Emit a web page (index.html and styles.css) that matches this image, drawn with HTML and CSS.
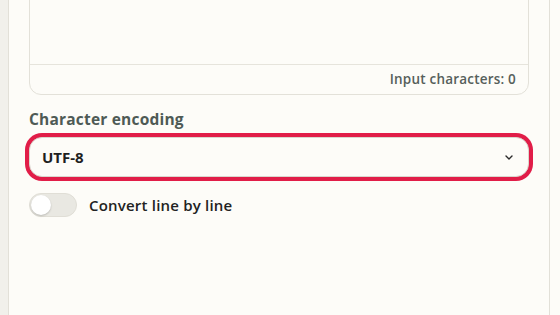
FILE: index.html
```html
<!DOCTYPE html>
<html lang="en">
<head>
  <meta charset="UTF-8" />
  <meta name="viewport" content="width=device-width, initial-scale=1.0" />
  <title>Character Converter</title>
  <link rel="stylesheet" href="styles.css">
</head>

<body>
  <aside class="side"></aside>

  <main class="panel">
    <div class="input-box">
      <textarea></textarea>
      <div class="input-footer">Input characters: <span id="count">0</span></div>
    </div>

    <label class="field-label" for="encoding">Character encoding</label>
    <div class="select-wrap">
      <select id="encoding">
        <option>UTF-8</option>
        <option>Shift_JIS</option>
        <option>EUC-JP</option>
      </select>
      <svg class="chevron" width="8" height="5" viewBox="0 0 8 5">
        <path d="M1 1l3 3 3-3" fill="none" stroke="#2b2b2b" stroke-width="1.4" stroke-linecap="round" stroke-linejoin="round"/>
      </svg>
    </div>

    <label class="toggle-row">
      <input type="checkbox" class="toggle-input" />
      <span class="toggle"><span class="knob"></span></span>
      <span class="toggle-text">Convert line by line</span>
    </label>
  </main>
</body>
</html>
```

FILE: styles.css
```css
body {
  margin: 0;
  font-family: "Open Sans", "Liberation Sans", Arial, sans-serif;
  display: flex;
  height: 100vh;
  overflow: hidden;
  background: #fdfcf8;
}

.side {
  width: 8px;
  background: #f1f0eb;
  border-right: 1px solid #e2e0d8;
}

.panel {
  width: 500px;
  padding: 0 20px;
  border-right: 1px solid #e2e0d8;
  display: flex;
  flex-direction: column;
}

.input-box {
  margin-top: -60px;
  border: 1px solid #e3e1d9;
  border-radius: 12px;
  overflow: hidden;
}

textarea {
  display: block;
  width: 100%;
  height: 124px;
  box-sizing: border-box;
  border: none;
  border-bottom: 1px solid #e6e4dc;
  background: transparent;
  resize: none;
  outline: none;
}

.input-footer {
  height: 29px;
  line-height: 29px;
  text-align: right;
  padding-right: 12px;
  font-size: 13.5px;
  font-weight: 600;
  letter-spacing: 0.2px;
  color: #56605b;
}

.field-label {
  margin-top: 13px;
  font-size: 15.5px;
  font-weight: 700;
  letter-spacing: 0.2px;
  line-height: 22px;
  color: #4e5a55;
}

.select-wrap {
  position: relative;
  margin-top: 7px;
}

select {
  appearance: none;
  width: 100%;
  height: 40px;
  box-sizing: border-box;
  padding: 0 12px;
  border: 1px solid #dad7ce;
  border-radius: 13px;
  background: #fdfcf8;
  box-shadow: 0 0 0 4px #e11d48;
  font-family: inherit;
  font-size: 15px;
  font-weight: 700;
  color: #1f1f1f;
  outline: none;
}

.chevron {
  position: absolute;
  right: 16px;
  top: 18px;
  pointer-events: none;
}

.toggle-row {
  display: flex;
  align-items: center;
  gap: 12px;
  margin-top: 16px;
  cursor: pointer;
}

.toggle-input {
  display: none;
}

.toggle {
  position: relative;
  width: 46px;
  height: 22px;
  border: 1px solid #e0ded6;
  border-radius: 12px;
  background: #e9e8e2;
}

.knob {
  position: absolute;
  left: 1px;
  top: 1px;
  width: 20px;
  height: 20px;
  border-radius: 50%;
  background: #fff;
  box-shadow: 0 1px 2px rgba(0, 0, 0, 0.2);
}

.toggle-input:checked + .toggle {
  background: #e11d48;
}

.toggle-input:checked + .toggle .knob {
  left: 25px;
}

.toggle-text {
  font-size: 15px;
  font-weight: 600;
  letter-spacing: 0.2px;
  color: #222;
}
```
